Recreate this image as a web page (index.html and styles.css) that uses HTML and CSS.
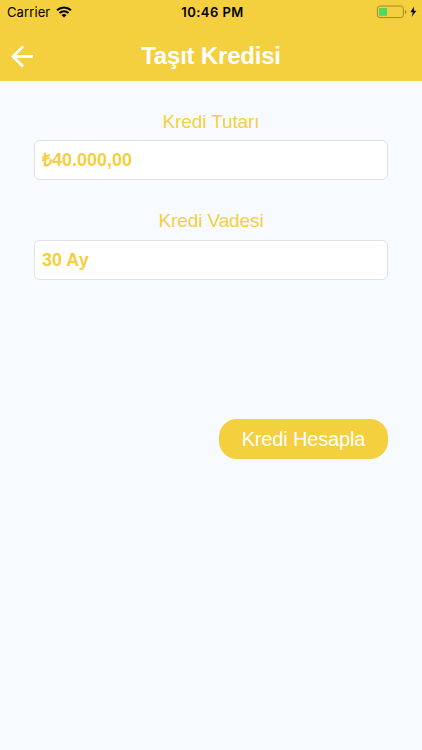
FILE: index.html
```
<!DOCTYPE html>
<html lang="tr">
<head>
  <meta charset="UTF-8">
  <meta name="viewport" content="width=device-width, initial-scale=1">
  <title>Taşıt Kredisi</title>
  <link rel="stylesheet" href="styles.css">
</head>
<body>
  <header>
    <div class="status-bar">
      <div class="carrier">
        <span>Carrier</span>
        <svg class="wifi" width="16" height="12" viewBox="0 0 16 12">
          <path d="M1 4.2a10.2 10.2 0 0 1 14 0M3.5 6.9a6.6 6.6 0 0 1 9 0" fill="none" stroke="#000" stroke-width="2"/>
          <path d="M8 11.6L5.5 9.1a3.6 3.6 0 0 1 5 0z"/>
        </svg>
      </div>
      <span class="time">10:46 PM</span>
      <div class="power">
        <svg width="41" height="14" viewBox="0 0 41 14">
          <rect x="1.4" y="1" width="26" height="11.6" rx="2.6" fill="none" stroke="#a68a25"/>
          <path d="M29.2 5v4c1.4-.6 1.4-3.4 0-4z" fill="#8d751f"/>
          <rect x="3" y="3" width="8" height="7.8" fill="#4cd964"/>
          <path d="M37.9 1.4L34.5 7.2h2.5l-1.5 4.8 4.9-6.3h-2.6z"/>
        </svg>
      </div>
    </div>
    <div class="nav-bar">
      <a class="back" href="#" aria-label="Geri">
        <svg width="24" height="24" viewBox="0 0 24 24" fill="none" stroke="#fff" stroke-width="2.8">
          <path d="M23 12.5H3M13 2.5l-10 10 10 10"/>
        </svg>
      </a>
      <h1>Taşıt Kredisi</h1>
    </div>
  </header>

  <main>
    <div class="form-group">
      <div class="label">Kredi Tutarı</div>
      <div class="field">₺40.000,00</div>
    </div>
    <div class="form-group">
      <div class="label">Kredi Vadesi</div>
      <div class="field">30 Ay</div>
    </div>
    <button class="submit">Kredi Hesapla</button>
  </main>
</body>
</html>
```
FILE: styles.css
```
:root {
  --yellow: #f4cf3e;
  --bg: #f7fbff;
}

* {
  box-sizing: border-box;
}

body {
  margin: 0;
  min-height: 750px;
  background: var(--bg);
  font-family: "Liberation Sans", Arial, sans-serif;
}

header {
  height: 81px;
  background: var(--yellow);
}

.status-bar {
  display: grid;
  grid-template-columns: 1fr auto 1fr;
  align-items: center;
  height: 24px;
  padding: 0 5px 0 7px;
  font-family: Inter, sans-serif;
  font-size: 13px;
  color: #000;
}

.carrier {
  display: flex;
  align-items: center;
  gap: 6px;
  letter-spacing: 0.1px;
}

.time {
  padding-left: 1px;
  font-weight: 600;
  letter-spacing: 0.45px;
}

.power {
  display: flex;
  justify-content: flex-end;
}

.nav-bar {
  display: grid;
  grid-template-columns: 40px 1fr 40px;
  align-items: center;
  height: 64px;
}

.back {
  display: flex;
  padding-left: 10px;
}

h1 {
  margin: 0;
  padding-bottom: 1px;
  font-size: 24px;
  line-height: 28px;
  letter-spacing: -0.2px;
  text-align: center;
  color: #fff;
}

main {
  display: flex;
  flex-direction: column;
  padding: 27px 34px 0;
}

.form-group {
  margin-bottom: 27px;
}

.label {
  height: 32px;
  line-height: 27px;
  font-size: 19px;
  letter-spacing: -0.1px;
  text-align: center;
  color: var(--yellow);
}

.form-group + .form-group .label {
  height: 33px;
}

.field {
  height: 40px;
  padding-left: 7px;
  border: 1px solid #dfe1e6;
  border-radius: 6px;
  background: #fff;
  line-height: 38px;
  font-size: 18px;
  font-weight: bold;
  color: var(--yellow);
}

.submit {
  align-self: flex-end;
  width: 169px;
  height: 40px;
  margin-top: 112px;
  padding: 1px 0 0;
  border: 0;
  border-radius: 18px;
  background: var(--yellow);
  font-family: inherit;
  font-size: 20px;
  letter-spacing: -0.15px;
  color: #fff;
}
```
